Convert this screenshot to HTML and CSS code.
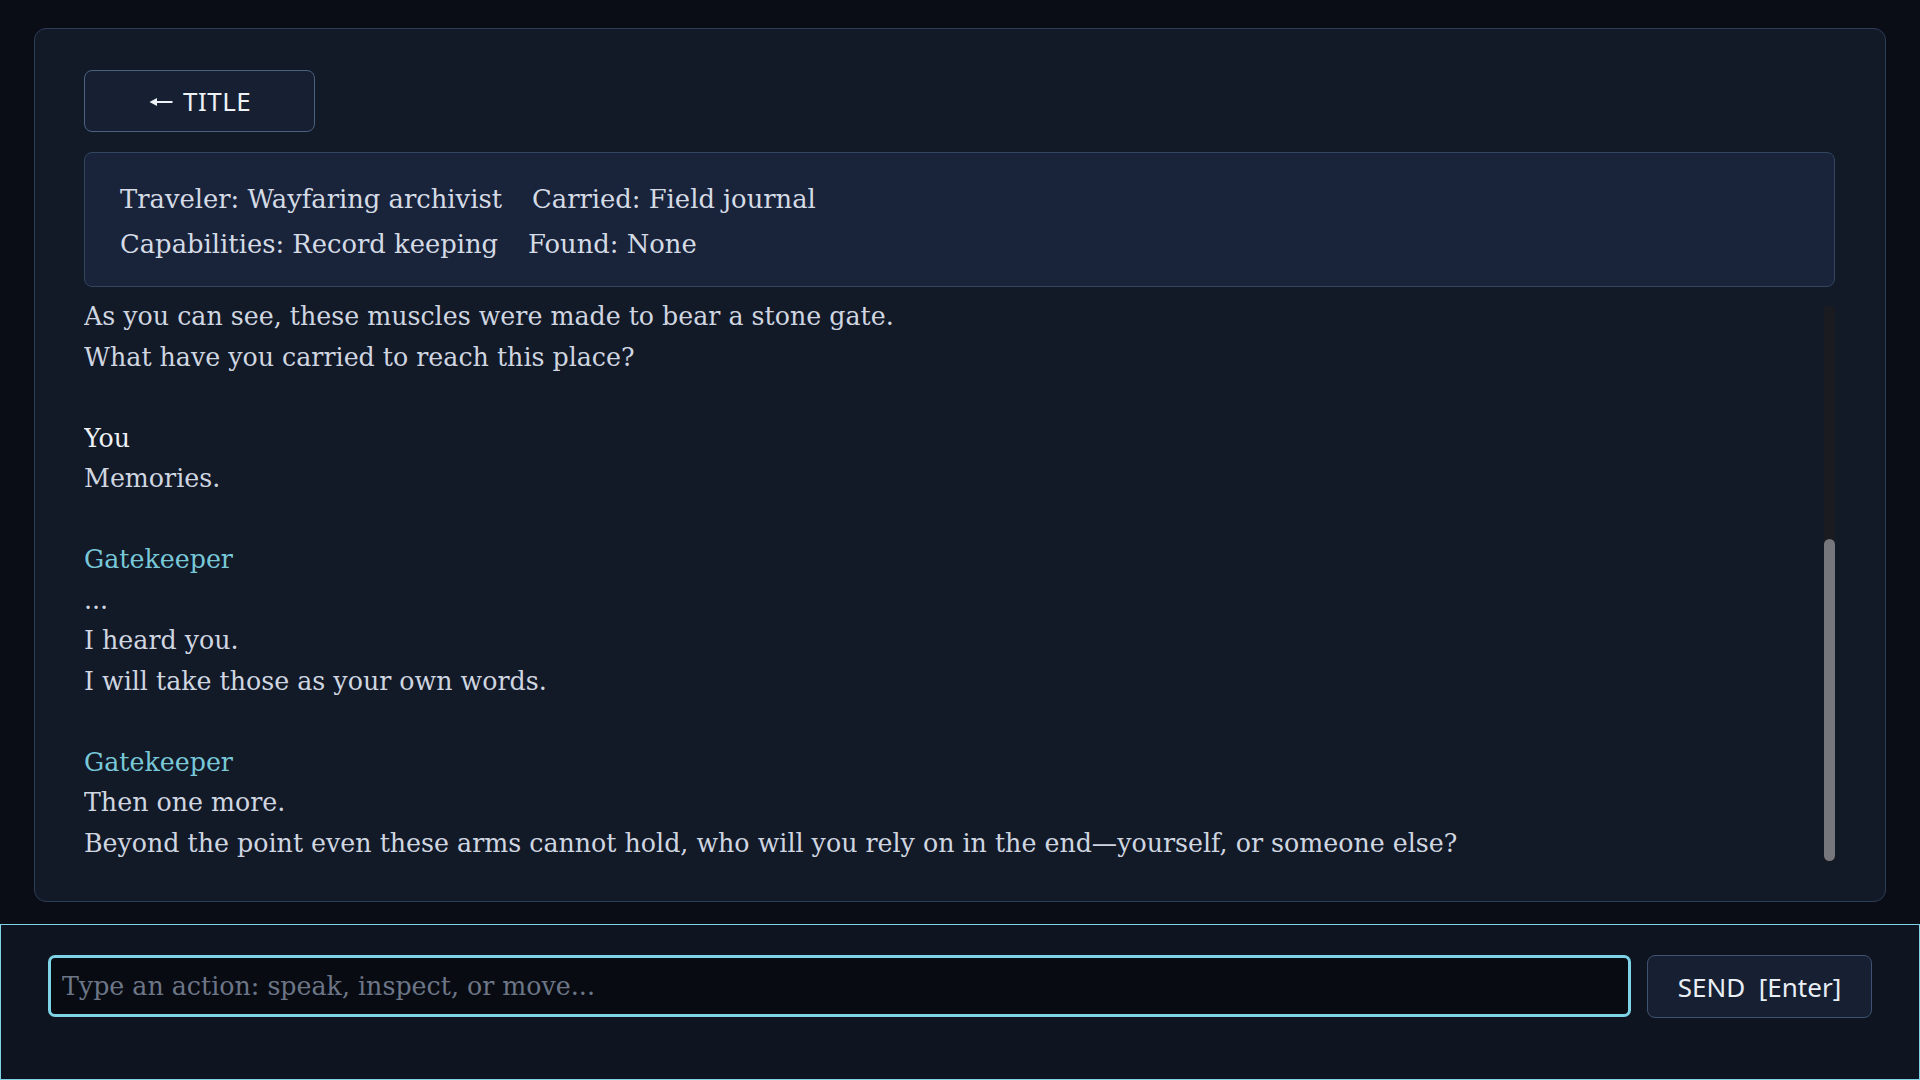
FILE: index.html
```html
<!DOCTYPE html>
<html lang="en">
<head>
<meta charset="utf-8">
<title>Gate</title>
<link rel="stylesheet" href="styles.css">
</head>
<body>
<div class="stage">
  <main class="panel">
    <button class="back-btn" type="button">
      <svg class="arrow" width="24" height="12" viewBox="0 0 24 12" aria-hidden="true">
        <path d="M0.5 6 L8 2 L8 10 Z" fill="#eef2f7"/>
        <path d="M6 6 H23.5" stroke="#eef2f7" stroke-width="2"/>
      </svg>
      <span>TITLE</span>
    </button>
    <section class="stats">
      <div class="stats-row">
        <span>Traveler: Wayfaring archivist</span>
        <span>Carried: Field journal</span>
      </div>
      <div class="stats-row">
        <span>Capabilities: Record keeping</span>
        <span>Found: None</span>
      </div>
    </section>
    <section class="log-area">
      <div class="log">
        <div class="msg">
          <div class="line">As you can see, these muscles were made to bear a stone gate.</div>
          <div class="line">What have you carried to reach this place?</div>
        </div>
        <div class="msg">
          <div class="speaker you">You</div>
          <div class="line">Memories.</div>
        </div>
        <div class="msg">
          <div class="speaker npc">Gatekeeper</div>
          <div class="line">...</div>
          <div class="line">I heard you.</div>
          <div class="line">I will take those as your own words.</div>
        </div>
        <div class="msg">
          <div class="speaker npc">Gatekeeper</div>
          <div class="line">Then one more.</div>
          <div class="line">Beyond the point even these arms cannot hold, who will you rely on in the end—yourself, or someone else?</div>
        </div>
      </div>
      <div class="scrollbar" aria-hidden="true">
        <div class="scroll-thumb"></div>
      </div>
    </section>
  </main>
</div>
<footer class="bar">
  <input class="action-input" type="text" placeholder="Type an action: speak, inspect, or move..." autofocus>
  <button class="send-btn" type="button">SEND  [Enter]</button>
</footer>
</body>
</html>
```
FILE: styles.css
```css
* { box-sizing: border-box; }

html, body {
  margin: 0;
  height: 100%;
}

body {
  background: #0a0d15;
  display: flex;
  flex-direction: column;
  height: 1080px;
  overflow: hidden;
  font-family: "DejaVu Serif", "Liberation Serif", serif;
  color: #cfd6e0;
}

.stage {
  flex: 1;
  min-height: 0;
  padding: 28px 34px 22px;
  display: flex;
}

.panel {
  flex: 1;
  min-height: 0;
  display: flex;
  flex-direction: column;
  align-items: flex-start;
  background: #121927;
  border: 1px solid #2c3d56;
  border-radius: 12px;
  padding: 41px 50px 37px 49px;
}

.back-btn {
  height: 62px;
  padding: 0 63px 0 64px;
  display: flex;
  align-items: center;
  gap: 10px;
  background: #172033;
  border: 1.5px solid #4a6180;
  border-radius: 8px;
  color: #eef2f7;
  font-family: "Noto Sans", "Open Sans", sans-serif;
  font-size: 26px;
  letter-spacing: 0.5px;
  cursor: pointer;
}

.back-btn .arrow {
  flex: none;
  display: block;
  margin-top: 2px;
}

.stats {
  align-self: stretch;
  margin-top: 20px;
  height: 135px;
  background: #19233a;
  border: 1px solid #33455f;
  border-radius: 8px;
  padding: 24px 34px 0 35px;
  font-size: 25.8px;
  line-height: 45.3px;
  color: #d4dbe5;
}

.stats-row {
  display: flex;
  gap: 30px;
  white-space: nowrap;
}

.log-area {
  align-self: stretch;
  flex: 1;
  min-height: 0;
  margin-top: 7px;
  display: flex;
}

.log {
  flex: 1;
  min-width: 0;
  overflow: hidden;
  display: flex;
  flex-direction: column;
  justify-content: flex-end;
  font-size: 25.3px;
  line-height: 40.5px;
}

.msg + .msg { margin-top: 40.5px; }

.speaker.npc { color: #78c8d8; }
.speaker.you { color: #eef1f5; }

.line { color: #cfd6e0; }

.scrollbar {
  flex: none;
  width: 11px;
  margin: 12px 0 3px;
  background: #191b20;
  display: flex;
  flex-direction: column;
  justify-content: flex-end;
}

.scroll-thumb {
  height: 322px;
  background: #76777c;
  border-radius: 6px;
}

.bar {
  height: 156px;
  flex: none;
  background: #0f1520;
  border: 1px solid #7ed4e6;
  padding: 30px 47px 0 47px;
  display: flex;
  align-items: flex-start;
  gap: 16px;
}

.action-input {
  flex: 1;
  height: 62px;
  background: #080b12;
  border: 3.5px solid #7ed4e6;
  border-radius: 7px;
  outline: none;
  padding: 0 11px;
  font-family: "DejaVu Serif", "Liberation Serif", serif;
  font-size: 25.3px;
  color: #d4dbe5;
  caret-color: #e8eef5;
}

.action-input::placeholder { color: #6c7687; }

.send-btn {
  height: 63px;
  width: 225px;
  background: #172033;
  border: 1.5px solid #3f5271;
  border-radius: 8px;
  color: #e9eef5;
  font-family: "Noto Sans", "Open Sans", sans-serif;
  font-size: 26px;
  white-space: pre;
  cursor: pointer;
}
```
